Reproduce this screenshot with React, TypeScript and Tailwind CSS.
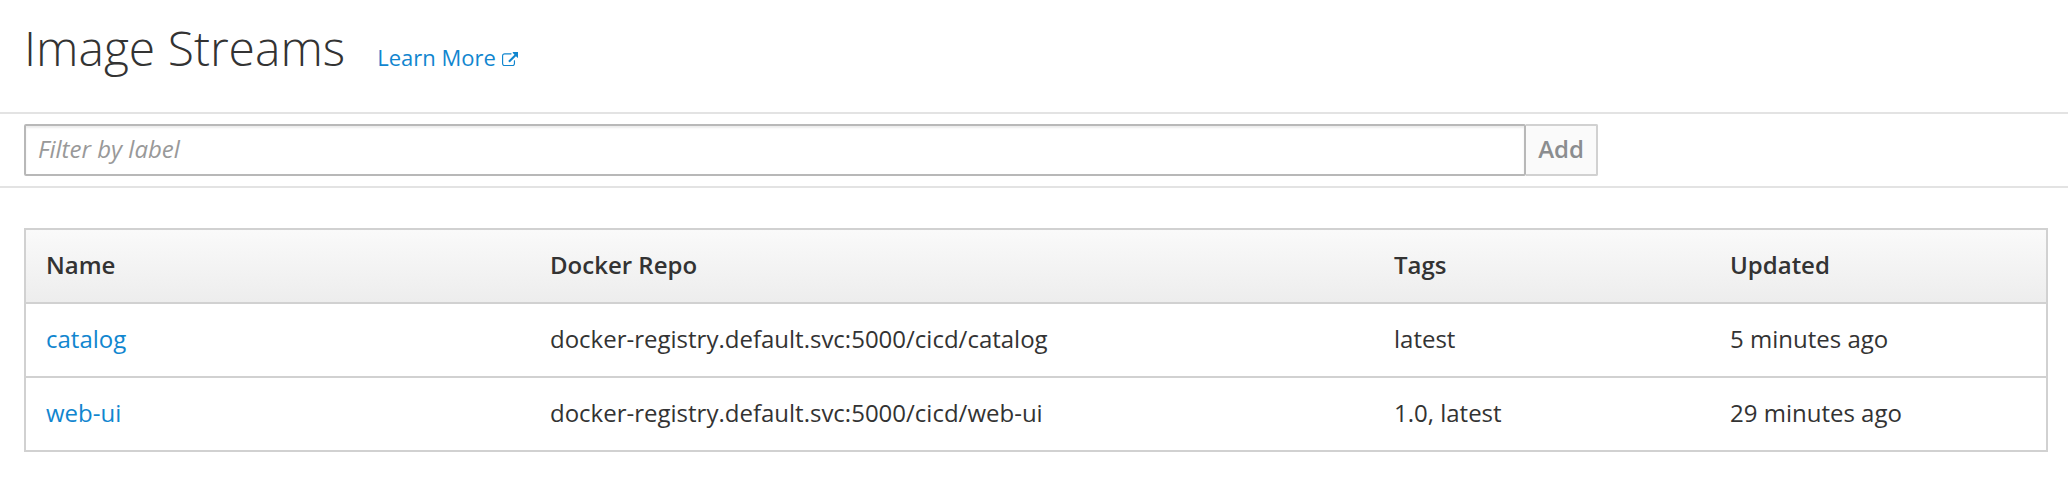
import React from "react";

const rows = [
  { name: "catalog", repo: "docker-registry.default.svc:5000/cicd/catalog", tags: "latest", updated: "5 minutes ago" },
  { name: "web-ui", repo: "docker-registry.default.svc:5000/cicd/web-ui", tags: "1.0, latest", updated: "29 minutes ago" },
];

export default function App() {
  return (
    <div className="h-[488px] w-[2068px] overflow-hidden bg-white font-['Open_Sans',sans-serif] text-[24px] leading-[40px] text-[#333]">
      <header className="flex h-[112px] items-baseline pl-[24px] pt-[15px]">
        <h1 className="text-[48px] font-light leading-[66px] whitespace-nowrap">Image Streams</h1>
        <a className="ml-[32px] flex items-baseline text-[22px] leading-[30px] text-[#1186cf] whitespace-nowrap">
          Learn More
          <svg className="ml-[6px] h-[14.3px] w-[16.6px]" viewBox="0 0 1792 1536" fill="currentColor">
            <path d="M1408 928v320q0 119-84.500 203.500t-203.500 84.500h-832q-119 0-203.500-84.500t-84.500-203.500v-832q0-119 84.500-203.500t203.500-84.500h704q14 0 23 9t9 23v64q0 14-9 23t-23 9h-704q-66 0-113 47t-47 113v832q0 66 47 113t113 47h832q66 0 113-47t47-113v-320q0-14 9-23t23-9h64q14 0 23 9t9 23zm384-864v512q0 26-19 45t-45 19-45-19l-176-176-652 652q-10 10-23 10t-23-10l-114-114q-10-10-10-23t10-23l652-652-176-176q-19-19-19-45t19-45 45-19h512q26 0 45 19t19 45z" />
          </svg>
        </a>
      </header>
      <div className="flex h-[76px] items-center border-y-2 border-[#e3e3e3] pl-[24px]">
        <div className="flex h-[52px] w-[1502px] items-center rounded-[2px] border-2 border-[#b8b8b8] pb-[2px] pl-[12px] italic text-[#999] shadow-[inset_0_2px_2px_rgba(0,0,0,0.075)]">Filter by label</div>
        <button className="h-[52px] w-[72px] rounded-r-[2px] border-2 border-l-0 border-[#d1d1d1] bg-[#fafafa] pb-[2px] font-semibold text-[#8b8d8f]">Add</button>
      </div>
      <main className="px-[24px] pt-[40px]">
        <div className="w-[2024px] border-2 border-[#d1d1d1]">
          <div className="grid h-[72px] grid-cols-[504px_844px_336px_1fr] items-center bg-linear-to-b from-[#fafafa] to-[#ededed] pb-[2px] pl-[20px] font-semibold">
            <span>Name</span><span>Docker Repo</span><span>Tags</span><span>Updated</span>
          </div>
          {rows.map((r) => (
            <div key={r.name} className="grid h-[74px] grid-cols-[504px_844px_336px_1fr] items-center border-t-2 border-[#d1d1d1] pb-[2px] pl-[20px]">
              <a className="text-[#1186cf]">{r.name}</a><span>{r.repo}</span><span>{r.tags}</span><span>{r.updated}</span>
            </div>
          ))}
        </div>
      </main>
    </div>
  );
}
